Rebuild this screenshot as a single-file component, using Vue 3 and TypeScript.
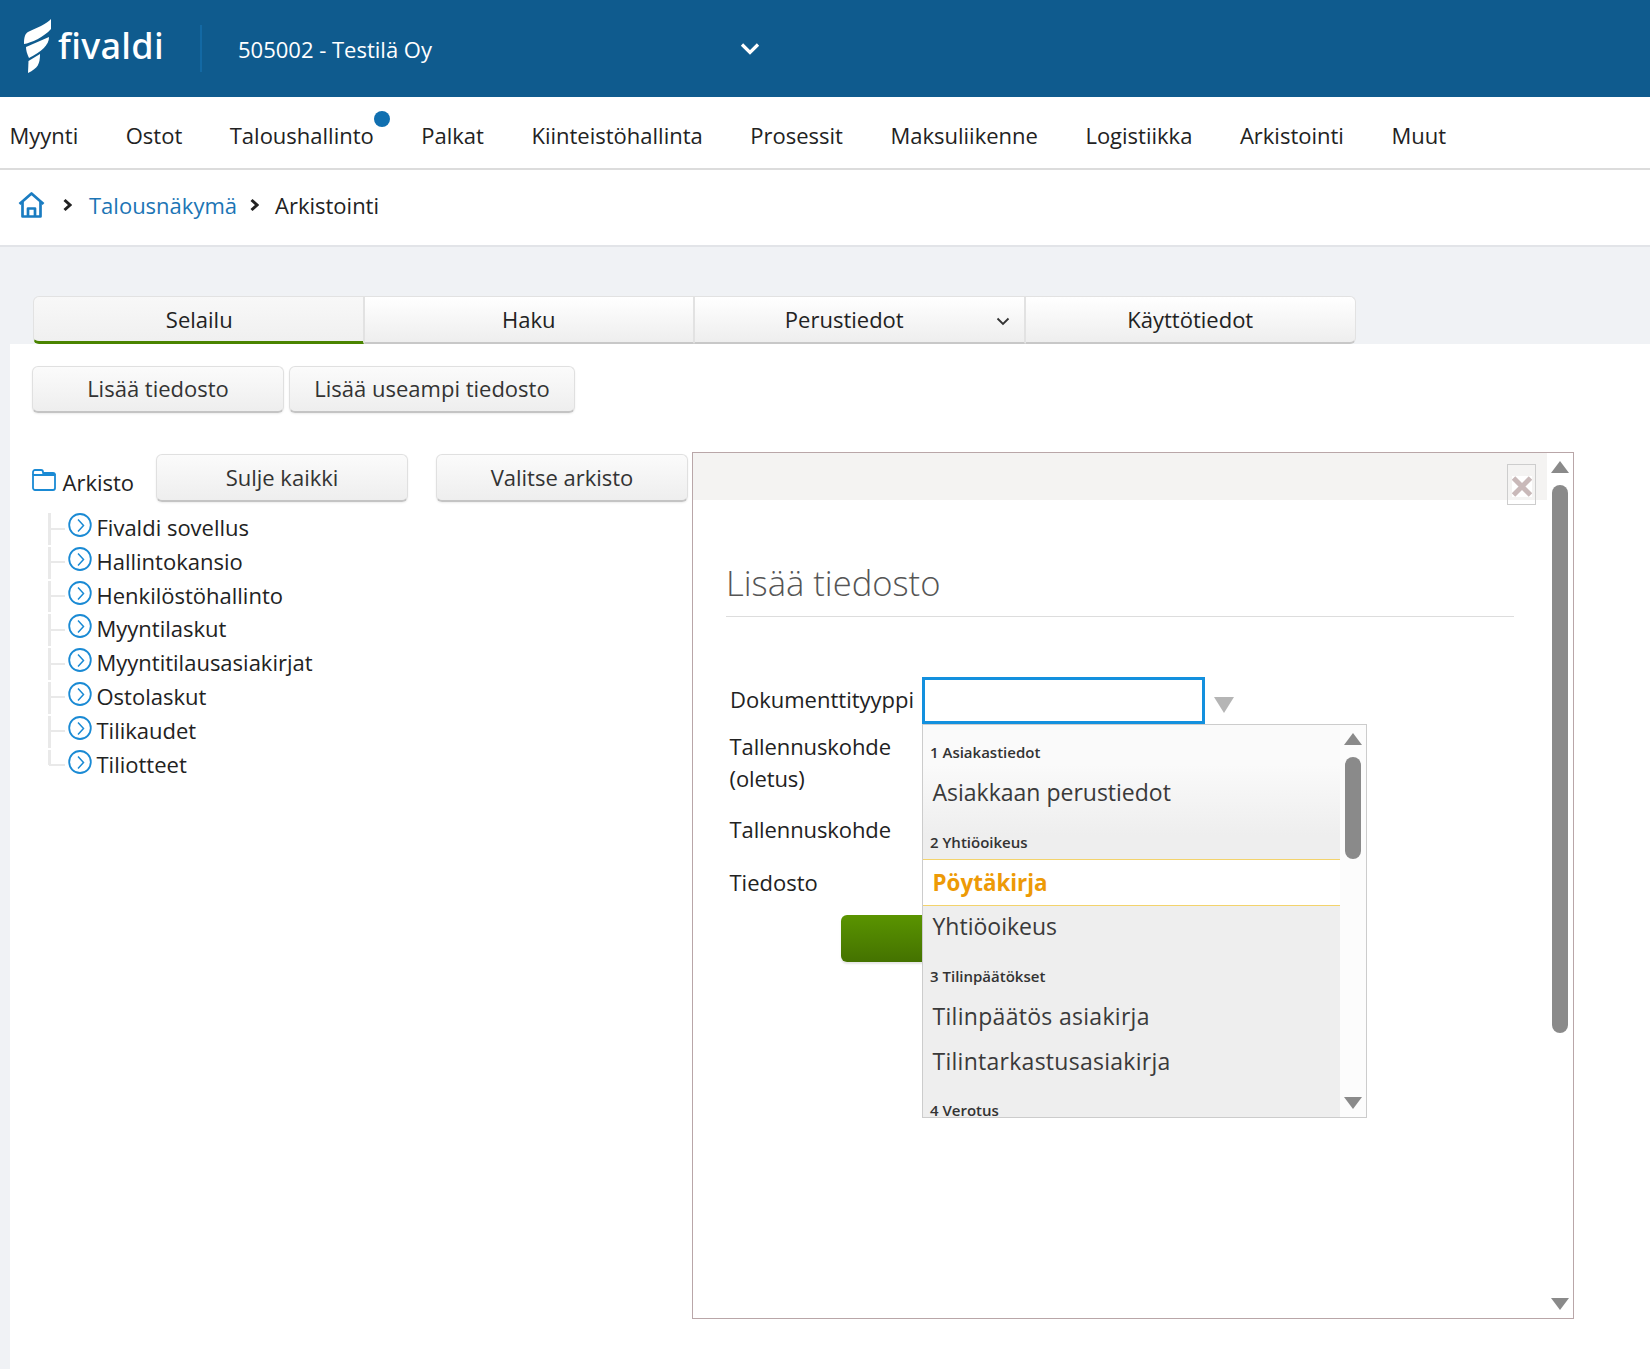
<script setup lang="ts">
const navItems: string[] = ['Myynti', 'Ostot', 'Taloushallinto', 'Palkat', 'Kiinteistöhallinta', 'Prosessit', 'Maksuliikenne', 'Logistiikka', 'Arkistointi', 'Muut']
const tabs: string[] = ['Selailu', 'Haku', 'Perustiedot', 'Käyttötiedot']
const tree: string[] = ['Fivaldi sovellus', 'Hallintokansio', 'Henkilöstöhallinto', 'Myyntilaskut', 'Myyntitilausasiakirjat', 'Ostolaskut', 'Tilikaudet', 'Tiliotteet']
</script>

<template>
  <div class="page">
    <header class="top">
      <div class="logo">
        <svg width="32" height="58" viewBox="22 17 32 58" fill="#fff">
          <path d="M51 19C47 24 36 28 28 32C25 34 24 37 24 44C31 43 44 37 51 29Z" />
          <path d="M26 47L49 37C49 45 42 51 29 58C27 54 26 50 26 47Z" />
          <path d="M28.500 61L40 54C40 64 38 68 28 73Z" />
        </svg>
        <span class="brand">fivaldi</span>
      </div>
      <div class="company">505002 - Testilä Oy</div>
      <svg class="top-chev" width="20" height="14" viewBox="0 0 20 14" fill="none" stroke="#fff" stroke-width="3.200">
        <path d="M2 2.500L10 10.500L18 2.500" />
      </svg>
    </header>

    <nav class="nav">
      <span v-for="n in navItems" :key="n" class="nav-item">
        {{ n }}<i v-if="n === 'Taloushallinto'" class="dot"></i>
      </span>
    </nav>

    <div class="crumbs">
      <svg width="27" height="26" viewBox="0 0 27 26" fill="none" stroke="#1a7cc1" stroke-width="2.700" stroke-linejoin="round">
        <path d="M1.500 12L13.500 1.500L25.500 12" />
        <path d="M4.500 10V24.500H22.500V10" />
        <path d="M10 24.500V16.500H17V24.500" />
      </svg>
      <svg class="crumb-chev first" width="9" height="14" viewBox="0 0 9 14" fill="none" stroke="#222" stroke-width="3"><path d="M1.500 2L7 7L1.500 12" /></svg>
      <a class="crumb-link">Talousnäkymä</a>
      <svg class="crumb-chev second" width="9" height="14" viewBox="0 0 9 14" fill="none" stroke="#222" stroke-width="3"><path d="M1.500 2L7 7L1.500 12" /></svg>
      <span>Arkistointi</span>
    </div>

    <div class="tabs">
      <div v-for="(t, i) in tabs" :key="t" class="tab" :class="{ active: i === 0 }">
        <span :class="{ shifted: t === 'Perustiedot' }">{{ t }}</span>
        <svg v-if="t === 'Perustiedot'" class="tab-chev" width="14" height="9" viewBox="0 0 14 9" fill="none" stroke="#333" stroke-width="1.800"><path d="M1.500 1.500L7 7L12.500 1.500" /></svg>
      </div>
    </div>

    <main class="content">
      <div class="actions">
        <button class="btn w252">Lisää tiedosto</button>
        <button class="btn w286">Lisää useampi tiedosto</button>
      </div>

      <div class="split">
        <section class="left">
          <div class="tree-head">
            <svg width="24" height="22" viewBox="0 0 24 22" fill="none" stroke="#1a8ad4" stroke-width="1.800" stroke-linejoin="round">
              <path d="M1 6V3C1 2 2 1 3 1H9C10 1 11 2 11 3V4H21C22 4 23 5 23 6" />
              <path d="M1 6H23V19C23 20 22 21 21 21H3C2 21 1 20 1 19Z" />
            </svg>
            <span class="root-label">Arkisto</span>
            <button class="btn tall sulje">Sulje kaikki</button>
            <button class="btn tall valitse">Valitse arkisto</button>
          </div>
          <ul class="tree">
            <li v-for="t in tree" :key="t" class="tree-item">
              <svg class="node" width="24" height="24" viewBox="0 0 24 24" fill="none" stroke="#1a8ad4" stroke-width="1.800">
                <ellipse cx="12" cy="12" rx="10.800" ry="11" />
                <path d="M10 6.500L15.500 12.500L10 18.500" stroke-width="1.500" />
              </svg>
              <span>{{ t }}</span>
            </li>
          </ul>
        </section>

        <section class="panel">
          <div class="panel-body">
            <div class="panel-strip">
              <div class="close">
                <svg width="20" height="21" viewBox="0 0 20 21">
                  <rect width="20" height="21" fill="#fff" />
                  <path d="M1.500 2L18.500 19M18.500 2L1.500 19" stroke="#c9b9b9" stroke-width="5" />
                </svg>
              </div>
            </div>
            <h2 class="title">Lisää tiedosto</h2>
            <div class="form">
              <div class="row first-row">
                <label class="lbl">Dokumenttityyppi</label>
                <div class="select-wrap">
                  <div class="input"></div>
                  <i class="arrow-down input-arrow"></i>
                  <div class="dropdown">
                    <div class="list">
                      <div class="grp g1">1 Asiakastiedot</div>
                      <div class="opt o1">Asiakkaan perustiedot</div>
                      <div class="grp g2">2 Yhtiöoikeus</div>
                      <div class="opt sel">Pöytäkirja</div>
                      <div class="opt o3">Yhtiöoikeus</div>
                      <div class="grp g3">3 Tilinpäätökset</div>
                      <div class="opt o4">Tilinpäätös asiakirja</div>
                      <div class="opt o5">Tilintarkastusasiakirja</div>
                      <div class="grp g4">4 Verotus</div>
                    </div>
                    <div class="scroll small">
                      <i class="arrow-up"></i>
                      <div class="thumb"></div>
                      <i class="arrow-down dark"></i>
                    </div>
                  </div>
                </div>
              </div>
              <div class="lbl two tight">Tallennuskohde<br />(oletus)</div>
              <div class="lbl r3 tight">Tallennuskohde</div>
              <div class="lbl r4">Tiedosto</div>
              <div class="green"></div>
            </div>
          </div>
          <div class="scroll big">
            <i class="arrow-up"></i>
            <div class="thumb"></div>
            <i class="arrow-down dark"></i>
          </div>
        </section>
      </div>
    </main>
  </div>
</template>

<style>
html, body { margin: 0; background: #f0f2f5; }
</style>

<style scoped>
* { box-sizing: border-box; }
.page {
  width: 1650px;
  height: 1369px;
  overflow: hidden;
  background: #f0f2f5;
  font-family: "Open Sans", "Noto Sans", sans-serif;
  font-size: 22px;
  color: #222;
}
.top {
  height: 97px;
  background: #0f5b8e;
  display: flex;
  align-items: center;
  color: #fff;
}
.logo {
  width: 202px;
  height: 47px;
  margin-top: -1px;
  padding-left: 22px;
  display: flex;
  align-items: center;
  border-right: 2px solid #1369a4;
}
.logo svg { flex: none; margin-top: -4px; }
.brand {
  font-family: "Noto Sans", sans-serif;
  font-size: 36px;
  font-weight: 500;
  line-height: 47px;
  letter-spacing: 0.300px;
  margin-left: 4px;
  margin-top: -5px;
}
.company {
  width: 502px;
  padding-left: 36px;
  margin-top: 1px;
}
.top-chev { margin-top: 1px; margin-left: 36px; }
.nav {
  height: 73px;
  background: #fff;
  border-bottom: 2px solid #dcdcdc;
  display: flex;
  align-items: center;
  gap: 47.500px;
  padding-left: 9.500px;
}
.nav-item { position: relative; white-space: nowrap; margin-top: 5px; }
.dot {
  position: absolute;
  right: -16px;
  top: -9px;
  width: 16px;
  height: 16px;
  border-radius: 50%;
  background: #106fb0;
}
.crumbs {
  height: 77px;
  background: #fff;
  border-bottom: 2px solid #e2e4e8;
  display: flex;
  align-items: center;
  padding: 0 0 5px 18px;
}
.crumb-chev { flex: none; }
.crumb-chev.first { margin: 0 17px 0 18px; }
.crumb-chev.second { margin: 0 16px 0 13px; }
.crumb-link { color: #1c75b5; }
.tabs {
  display: flex;
  padding: 49px 0 0 33px;
}
.tab {
  position: relative;
  width: 330.500px;
  height: 48px;
  display: flex;
  align-items: center;
  justify-content: center;
  padding-bottom: 1px;
  background: linear-gradient(#fff, #eeeeee);
  border: 1px solid #e2e2e2;
  border-bottom: 2px solid #c8c8c8;
  border-radius: 0;
}
.tab:last-child { border-radius: 0 6px 6px 0; width: 331.500px; }
.tab.active {
  padding: 0 0 0 2px;
  background: linear-gradient(#f8f8f8, #f0f0f0);
  border-bottom: 3px solid #4a8400;
  border-radius: 6px 0 0 6px;
}
.tab .shifted { margin-right: 30px; }
.tab-chev { position: absolute; right: 14px; top: 20px; }
.content {
  margin-left: 10px;
  height: 1026px;
  background: #fff;
  padding: 22px 0 0 22px;
}
.actions { display: flex; gap: 5px; }
.btn {
  height: 47px;
  font: inherit;
  font-size: 22px;
  color: #333;
  background: linear-gradient(#fbfbfb, #eeeeee);
  border: 1px solid #e0e0e0;
  border-bottom: 2px solid #c4c4c4;
  border-radius: 6px;
  padding: 0 0 2px;
  box-shadow: 0 1px 2px rgba(0, 0, 0, 0.08);
}
.tall { width: 252px; height: 48px; }
.w252 { width: 252px; }
.w286 { width: 286px; }
.split { display: flex; margin-top: 40px; }
.left { width: 660px; flex: none; }
.tree-head { display: flex; align-items: flex-start; height: 48px; }
.tree-head svg { margin-top: 16px; flex: none; }
.root-label { margin-left: 6.500px; margin-top: 14px; width: 93.500px; }
.sulje { margin-right: 28px; margin-top: 1px; }
.valitse { margin-top: 1px; }
.tree { list-style: none; margin: 8px 0 0; padding: 0 0 0 17px; }
.tree-item {
  position: relative;
  height: 33.800px;
  display: flex;
  align-items: flex-start;
  padding-left: 19px;
}
.tree-item::before {
  content: "";
  position: absolute;
  left: -1px;
  top: 4px;
  bottom: -2px;
  width: 3px;
  background: #e9e9e9;
}
.tree-item::after {
  content: "";
  position: absolute;
  left: 0;
  top: 18.500px;
  width: 16px;
  height: 2px;
  background: #e9e9e9;
}
.tree-item:last-child::before { bottom: 14px; }
.tree-item span { margin-left: 4.500px; margin-top: 2px; line-height: 32px; }
.node { flex: none; margin-top: 4px; }
.panel {
  width: 882px;
  height: 867px;
  margin-top: -1px;
  border: 1px solid #b9a6a8;
  display: flex;
  position: relative;
  background: #fff;
}
.panel-body { flex: 1; min-width: 0; }
.panel-strip {
  height: 47px;
  background: #f4f3f2;
  position: relative;
  width: 854px;
}
.close {
  position: absolute;
  right: 11px;
  top: 11px;
  width: 29px;
  height: 41px;
  border: 1px solid #cdcdcd;
  display: flex;
  align-items: flex-end;
  justify-content: center;
  padding-bottom: 7px;
}
.title {
  margin: 55px 33px 0 33px;
  height: 62px;
  width: 788px;
  font-size: 34.600px;
  font-weight: 300;
  line-height: 56px;
  color: #555;
  border-bottom: 1px solid #dddddd;
}
.form { position: relative; padding: 60px 0 0 37px; }
.lbl { line-height: 32px; white-space: nowrap; }
.tight { margin-left: -0.500px; letter-spacing: -0.100px; }
.row { display: flex; align-items: center; height: 47px; position: relative; }
.row .lbl { width: 192px; margin-top: -3px; }
.two { margin-top: 6px; }
.r3 { margin-top: 19px; }
.r4 { margin-top: 21px; margin-left: -0.500px; }
.select-wrap { position: relative; width: 283px; height: 47px; }
.input {
  width: 283px;
  height: 47px;
  border: 3px solid #1390de;
  background: #fff;
}
.input-arrow {
  position: absolute;
  left: 292px;
  top: 20px;
  border-left: 10px solid transparent;
  border-right: 10px solid transparent;
  border-top: 16px solid #b5b5b5;
  width: 0;
  height: 0;
}
.dropdown {
  position: absolute;
  left: 0;
  top: 47px;
  width: 445px;
  height: 394px;
  z-index: 3;
  border: 1px solid #cccccc;
  display: flex;
  background: #fcfcfc;
  overflow: hidden;
}
.list {
  width: 417px;
  flex: none;
  overflow: hidden;
  background: linear-gradient(#fafafa 0, #fafafa 40px, #eeeeee 110px, #eeeeee 100%);
  color: #3a3a3a;
}
.grp {
  font-size: 15px;
  font-weight: 600;
  line-height: 20px;
  padding-left: 7px;
  color: #333;
  white-space: nowrap;
}
.opt {
  font-size: 23px;
  line-height: 32px;
  padding-left: 9.500px;
  white-space: nowrap;
}
.g1 { margin-top: 17px; }
.o1 { margin-top: 14px; }
.g2 { margin-top: 24px; }
.sel {
  margin-top: 7px;
  height: 47px;
  line-height: 46px;
  font-size: 22.400px;
  font-weight: 700;
  color: #ed9a06;
  background: #fff;
  border-top: 1px solid #f3d36c;
  border-bottom: 1px solid #f3d36c;
}
.o3 { margin-top: 4px; }
.g3 { margin-top: 24px; }
.o4 { margin-top: 14px; letter-spacing: 0.300px; }
.o5 { margin-top: 13px; letter-spacing: 0.270px; }
.g4 { margin-top: 23px; }
.scroll { display: flex; flex-direction: column; align-items: center; flex: none; }
.scroll.small { width: 26px; padding-top: 8px; position: relative; }
.scroll.small .thumb { width: 16px; height: 102px; margin-top: 12px; }
.scroll.small .arrow-down { position: absolute; top: 372px; }
.scroll.big { width: 26px; padding-top: 8px; position: relative; background: #fff; }
.scroll.big .thumb { width: 16px; height: 548px; margin-top: 12px; }
.scroll.big .arrow-down { position: absolute; top: 845px; }
.thumb { background: #8a8a8a; border-radius: 8px; }
.arrow-up {
  width: 0;
  height: 0;
  border-left: 9px solid transparent;
  border-right: 9px solid transparent;
  border-bottom: 12px solid #8a8a8a;
}
.arrow-down.dark {
  width: 0;
  height: 0;
  border-left: 9px solid transparent;
  border-right: 9px solid transparent;
  border-top: 12px solid #8a8a8a;
}
.green {
  margin: 17px 0 0 111px;
  width: 200px;
  height: 47px;
  border-radius: 6px;
  background: linear-gradient(#5a9400, #447200);
  box-shadow: 0 2px 2px rgba(0, 0, 0, 0.1);
}
</style>
